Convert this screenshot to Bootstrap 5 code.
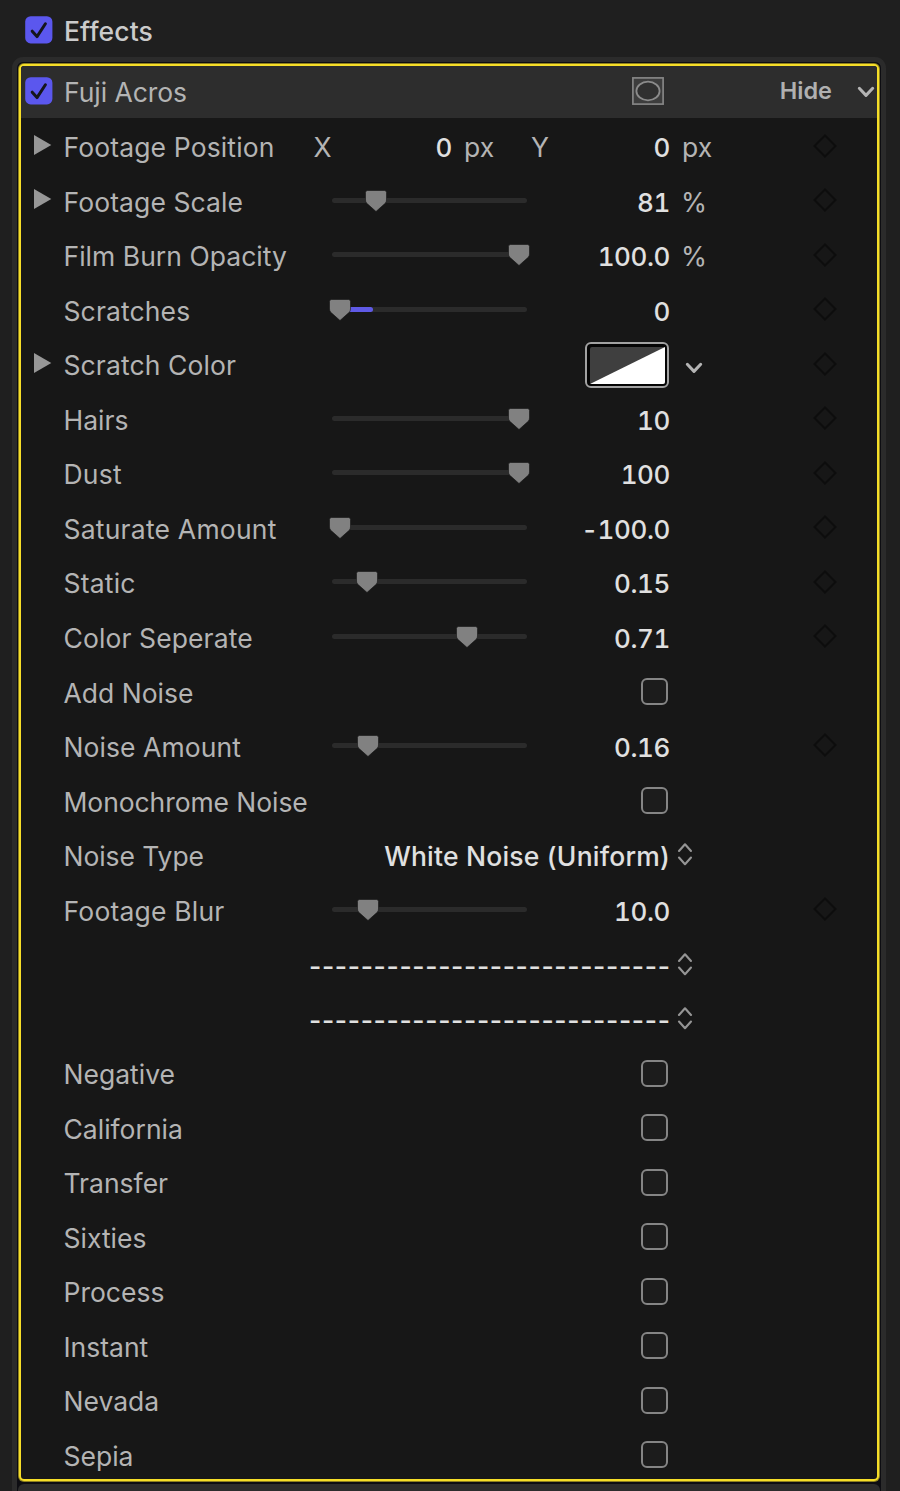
<!DOCTYPE html>
<html lang="en" data-bs-theme="dark">
<head>
<meta charset="utf-8">
<meta name="viewport" content="width=device-width, initial-scale=1">
<title>Effects inspector</title>
<link href="https://cdn.jsdelivr.net/npm/bootstrap@5.3.0/dist/css/bootstrap.min.css" rel="stylesheet">
<style>
body{background:#1f1f1f;color:#b4b4b4;font-family:Inter,"Liberation Sans",sans-serif;font-size:26.5px;line-height:1;height:1491px;overflow:hidden;white-space:nowrap}
svg{display:block;flex:none}
.top-bar{height:57px;padding:2px 0 0 25px}
.top-bar .title{color:#cbcbcb;font-weight:500;letter-spacing:.1px;margin-left:11px;padding-top:3px}
.frame{margin:0 14px 0 12px;height:1434px;border:5px solid #2b2b2b;border-bottom:0;border-radius:11px 11px 0 0;background:#0d0d12;padding:2px 1px 0}
.effect{height:1417px;margin:0 1px;border:2px solid #f6de28;box-shadow:0 0 0 1px #8d8020;border-radius:5px;background:#171717;overflow:hidden}
.effect-head{height:52.3px;background:#2d2d2d;padding:0 0 2px 4px}
.effect-head .title{margin-left:11px;padding-top:3px;letter-spacing:-.05px}
.hide-btn{font-size:23.5px;font-weight:600;color:#b0b0b0;margin-right:-1px}
.next{height:14px;margin-top:3px;background:#2c2c2c;border-radius:6px 6px 0 0}
.prm{display:grid;grid-template-columns:43px 245px 361px 1fr 81px;align-items:center;height:54.54px}
.prm .disc{margin-left:13px;margin-bottom:2px}
.prm .lbl,.xy .lbl{padding-top:3.8px}
.prm .lbl{margin-left:-.5px}
.num{color:#e0e0e0;font-weight:500;padding-top:5.2px;font-size:26px;font-variant-numeric:tabular-nums;letter-spacing:-.4px}
.unit{padding-top:4px;padding-left:11px}
.xy .unit{padding-left:12px}
.track{position:relative;width:195px;height:5px;border-radius:3px;background:#2b2b2b;margin-left:23px}
.track .fill{position:absolute;left:8px;width:33px;height:5px;border-radius:3px;background:#5f5ae6}
.track svg{position:absolute;top:-8px;margin-left:-11px}
.box{width:27px;height:27px;border:2px solid #858585;border-radius:6px;background:#1c1c1c;margin-right:2px;margin-top:1px}
.xy{grid-column:3/5;display:grid;grid-template-columns:5px 51px 87px 79.5px 50.5px 88px 1fr;align-items:center}
.pop{color:#e0e0e0;font-weight:500;padding-top:4px;letter-spacing:.21px}
.pop.dashes{letter-spacing:.66px;margin-right:3.7px;padding-top:5px}
.well{width:84px;height:46px;border:2px solid #a2a2a2;border-radius:6px;background:#050505;padding:2px;margin:2px 1px 0 0}
</style>
</head>
<body>
<svg width="0" height="0" class="position-absolute">
<symbol id="check" viewBox="0 0 28 28"><rect x=".2" y=".2" width="27.2" height="27.2" rx="5.5" fill="#5b57ee"/><path d="M7.2 15.2 12 20.6 20.4 7.8" fill="none" stroke="#15151c" stroke-width="3" stroke-linecap="round" stroke-linejoin="round"/></symbol>
<symbol id="chev" viewBox="0 0 18 12"><path d="M2.3 2.3 9 9.4 15.7 2.3" fill="none" stroke="#b4b4b4" stroke-width="3" stroke-linecap="round" stroke-linejoin="round"/></symbol>
<symbol id="tri" viewBox="0 0 18 20"><path d="M0 0 17.3 10 0 20Z" fill="#979797"/></symbol>
<symbol id="thumb" viewBox="0 0 22 22"><path d="M2.5.5h17q2 0 2 2V10q0 2-1.3 3.3L11 21.5 1.8 13.3Q.5 12 .5 10V2.5q0-2 2-2Z" fill="#818181" stroke="#141414" stroke-width=".6"/></symbol>
<symbol id="key" viewBox="0 0 24 24"><path d="M12 1.5 22.5 12 12 22.5 1.5 12Z" fill="none" stroke="#0d0d0d" stroke-width="2"/></symbol>
<symbol id="updown" viewBox="0 0 16 24"><path d="M2 9 8 2.3 14 9M2 15.5 8 22.2 14 15.5" fill="none" stroke="#959595" stroke-width="2.1" stroke-linecap="round" stroke-linejoin="round"/></symbol>
</svg>
<header class="top-bar d-flex align-items-center"><svg width="28" height="28"><use href="#check"/></svg><span class="title">Effects</span></header>
<main class="frame">
<section class="effect">
<div class="effect-head d-flex align-items-center"><svg width="28" height="28"><use href="#check"/></svg><span class="title">Fuji Acros</span>
<svg class="ms-auto" width="32" height="28" viewBox="0 0 32 28"><rect x=".9" y=".9" width="30.2" height="26.2" fill="#3d3d3d" stroke="#858585" stroke-width="1.7"/><ellipse cx="16" cy="14" rx="11.6" ry="9.3" fill="#303030" stroke="#8b8b8b" stroke-width="1.8"/></svg>
<span class="hide-btn" style="margin-left:116px">Hide</span><svg width="18" height="12" style="margin:2px 2px 0 26px"><use href="#chev"/></svg></div>
<div id="params"></div>
</section>
<div class="next"></div>
</main>
<script src="https://cdn.jsdelivr.net/npm/bootstrap@5.3.0/dist/js/bootstrap.bundle.min.js"></script>
<script>
const dashes = '-'.repeat(28);
// label, kind, value, slider thumb offset, options (d: disclosure, u: unit, ls: label tracking)
const params = [
 ['Footage Position','xy','',0,{d:1,ls:.13}],
 ['Footage Scale','slider','81',44,{d:1,u:'%',ls:.1}],
 ['Film Burn Opacity','slider','100.0',187,{u:'%',ls:.03}],
 ['Scratches','slider','0',8,{fill:1,ls:.12}],
 ['Scratch Color','color','',0,{d:1,ls:.1}],
 ['Hairs','slider','10',187],
 ['Dust','slider','100',187,{ls:.2}],
 ['Saturate Amount','slider','-100.0',8,{ls:.22}],
 ['Static','slider','0.15',35,{ls:.2}],
 ['Color Seperate','slider','0.71',135,{ls:.1}],
 ['Add Noise','check'],
 ['Noise Amount','slider','0.16',36,{ls:.07}],
 ['Monochrome Noise','check','',0,{ls:-.08}],
 ['Noise Type','popup','White Noise (Uniform)',0,{ls:-.07}],
 ['Footage Blur','slider','10.0',36,{ls:.2}],
 ['','popup',dashes],['','popup',dashes],
 ...['Negative','California','Transfer','Sixties','Process','Instant','Nevada','Sepia'].map(n=>[n,'check'])
];
const icon=(id,w,h,c='',s='')=>`<svg width="${w}" height="${h}" class="${c}" style="${s}"><use href="#${id}"/></svg>`;
document.getElementById('params').innerHTML = params.map(([name,kind,val,pos,o={}])=>{
 let mid='',end='';
 if(kind==='xy') mid=`<div class="xy"><span></span><span class="lbl">X</span><span class="num text-end">0</span><span class="unit">px</span><span class="lbl">Y</span><span class="num text-end">0</span><span class="unit">px</span></div>`;
 if(kind==='slider'){ mid=`<div class="d-flex align-items-center justify-content-between"><div class="track">${o.fill?'<div class="fill"></div>':''}${icon('thumb',22,22,'',`left:${pos}px`)}</div><span class="num">${val}</span></div>`; end=`<span class="unit">${o.u||''}</span>`; }
 if(kind==='check'){ mid='<div class="box ms-auto"></div>'; end='<span></span>'; }
 if(kind==='popup'){ mid=`<span class="pop text-end ${val===dashes?'dashes':''}">${val}</span>`; end=`<div>${icon('updown',16,24,'','margin-left:7px')}</div>`; }
 if(kind==='color'){ mid='<div class="well ms-auto"><svg width="80" height="42" viewBox="-2 -2 80 42" style="margin:-2px"><rect x="1" y="1" width="75" height="37" rx="2" fill="#3f3f3f"/><path d="M1 38 76 1V36q0 2-2 2Z" fill="#fff"/></svg></div>'; end=`<div>${icon('chev',18,12,'','margin:8px 0 0 15px')}</div>`; }
 const key=['xy','slider','color'].includes(kind)?icon('key',24,24,'','margin:0 0 0 17px'):'';
 return `<div class="prm"><div>${o.d?icon('tri',18,20,'disc'):''}</div><span class="lbl" style="letter-spacing:${o.ls||0}px">${name}</span>${mid}${end}${key}</div>`;
}).join('');
</script>
</body>
</html>
